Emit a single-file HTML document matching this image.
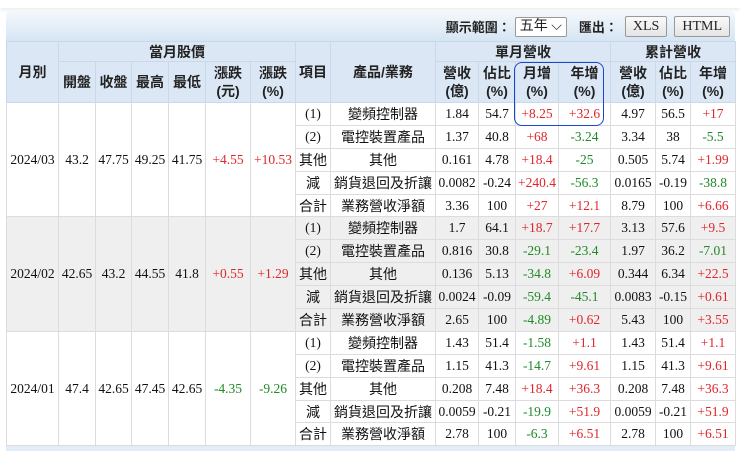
<!DOCTYPE html>
<html><head><meta charset="utf-8"><style>
body{margin:0;width:740px;height:449px;overflow:hidden;background:#fff;font-family:"Liberation Serif","Noto Sans CJK TC",serif;}
.top{position:absolute;left:0;top:0;width:740px;height:8px;background:#fff;box-shadow:0 2px 4px rgba(0,0,0,.08);}
.panel{position:absolute;left:6px;top:11px;width:729px;height:440px;background:#e3edf7;border-radius:6px 6px 0 0;}
.bar{position:absolute;left:6px;top:11px;width:729px;height:30px;background:linear-gradient(#f4f8fc,#d6e5f3);border-radius:6px 6px 0 0;}
.tools{position:absolute;right:10px;top:16px;font:bold 13px "Liberation Sans","Noto Sans CJK TC",sans-serif;color:#222;display:flex;align-items:center;gap:4px;}
.sel{border:1px solid #999;background:#fff;font:14px "Liberation Serif","Noto Sans CJK TC",serif;padding:0 4px;height:18px;line-height:18px;border-radius:2px;font-weight:normal}
.btn{border:1px solid #999;background:linear-gradient(#fafafa,#e4e4e4);font:14px "Liberation Serif",serif;padding:0 7px;height:19px;line-height:19px;border-radius:2px;font-weight:normal;margin-left:3px}
table{position:absolute;left:6px;top:41px;border-collapse:collapse;table-layout:fixed;width:729px;font-size:13.5px;}
th{background:#dbe7f4;border:1px solid #c9d9ea;font:bold 14px "Liberation Sans","Noto Sans CJK TC",sans-serif;color:#222;line-height:18px;padding:0;}
td{border:1px solid #dcdcdc;text-align:center;padding:0;height:21.9px;color:#111;white-space:nowrap;background:#fff}
td.c{font-family:"Liberation Sans","Noto Sans CJK TC",sans-serif;font-size:14px}
tr.g td{background:#efefef}
.r{color:#e0262a}.gr{color:#1f8a28}
.box{position:absolute;left:514px;top:62px;width:88px;height:62px;border:1.5px solid #1848d0;border-radius:8px;}
</style></head><body>
<div class="top"></div>
<div class="panel"></div>
<div class="bar"></div>
<div class="tools">顯示範圍：<span class="sel">五年 ⌵</span><span style="margin-left:8px">匯出：</span><span class="btn">XLS</span><span class="btn">HTML</span></div>
<table>
<colgroup><col style="width:52px"><col style="width:37px"><col style="width:36px"><col style="width:37px"><col style="width:37px"><col style="width:45px"><col style="width:45px"><col style="width:35px"><col style="width:105px"><col style="width:43px"><col style="width:37px"><col style="width:43px"><col style="width:52px"><col style="width:45px"><col style="width:35px"><col style="width:45px"></colgroup>
<tr style="height:20px"><th rowspan="2">月別</th><th colspan="6">當月股價</th><th rowspan="2">項目</th><th rowspan="2">產品/業務</th><th colspan="4">單月營收</th><th colspan="3">累計營收</th></tr>
<tr style="height:41px"><th>開盤</th><th>收盤</th><th>最高</th><th>最低</th><th>漲跌<br>(元)</th><th>漲跌<br>(%)</th><th>營收<br>(億)</th><th>佔比<br>(%)</th><th>月增<br>(%)</th><th>年增<br>(%)</th><th>營收<br>(億)</th><th>佔比<br>(%)</th><th>年增<br>(%)</th></tr>

<tr><td rowspan="5">2024/03</td><td rowspan="5">43.2</td><td rowspan="5">47.75</td><td rowspan="5">49.25</td><td rowspan="5">41.75</td><td rowspan="5" class="r">+4.55</td><td rowspan="5" class="r">+10.53</td><td>(1)</td><td class="c">變頻控制器</td><td>1.84</td><td>54.7</td><td class="r">+8.25</td><td class="r">+32.6</td><td>4.97</td><td>56.5</td><td class="r">+17</td></tr>
<tr><td>(2)</td><td class="c">電控裝置產品</td><td>1.37</td><td>40.8</td><td class="r">+68</td><td class="gr">-3.24</td><td>3.34</td><td>38</td><td class="gr">-5.5</td></tr>
<tr><td class="c">其他</td><td class="c">其他</td><td>0.161</td><td>4.78</td><td class="r">+18.4</td><td class="gr">-25</td><td>0.505</td><td>5.74</td><td class="r">+1.99</td></tr>
<tr><td class="c">減</td><td class="c">銷貨退回及折讓</td><td>0.0082</td><td>-0.24</td><td class="r">+240.4</td><td class="gr">-56.3</td><td>0.0165</td><td>-0.19</td><td class="gr">-38.8</td></tr>
<tr><td class="c">合計</td><td class="c">業務營收淨額</td><td>3.36</td><td>100</td><td class="r">+27</td><td class="r">+12.1</td><td>8.79</td><td>100</td><td class="r">+6.66</td></tr>

<tr class="g"><td rowspan="5">2024/02</td><td rowspan="5">42.65</td><td rowspan="5">43.2</td><td rowspan="5">44.55</td><td rowspan="5">41.8</td><td rowspan="5" class="r">+0.55</td><td rowspan="5" class="r">+1.29</td><td>(1)</td><td class="c">變頻控制器</td><td>1.7</td><td>64.1</td><td class="r">+18.7</td><td class="r">+17.7</td><td>3.13</td><td>57.6</td><td class="r">+9.5</td></tr>
<tr class="g"><td>(2)</td><td class="c">電控裝置產品</td><td>0.816</td><td>30.8</td><td class="gr">-29.1</td><td class="gr">-23.4</td><td>1.97</td><td>36.2</td><td class="gr">-7.01</td></tr>
<tr class="g"><td class="c">其他</td><td class="c">其他</td><td>0.136</td><td>5.13</td><td class="gr">-34.8</td><td class="r">+6.09</td><td>0.344</td><td>6.34</td><td class="r">+22.5</td></tr>
<tr class="g"><td class="c">減</td><td class="c">銷貨退回及折讓</td><td>0.0024</td><td>-0.09</td><td class="gr">-59.4</td><td class="gr">-45.1</td><td>0.0083</td><td>-0.15</td><td class="r">+0.61</td></tr>
<tr class="g"><td class="c">合計</td><td class="c">業務營收淨額</td><td>2.65</td><td>100</td><td class="gr">-4.89</td><td class="r">+0.62</td><td>5.43</td><td>100</td><td class="r">+3.55</td></tr>

<tr><td rowspan="5">2024/01</td><td rowspan="5">47.4</td><td rowspan="5">42.65</td><td rowspan="5">47.45</td><td rowspan="5">42.65</td><td rowspan="5" class="gr">-4.35</td><td rowspan="5" class="gr">-9.26</td><td>(1)</td><td class="c">變頻控制器</td><td>1.43</td><td>51.4</td><td class="gr">-1.58</td><td class="r">+1.1</td><td>1.43</td><td>51.4</td><td class="r">+1.1</td></tr>
<tr><td>(2)</td><td class="c">電控裝置產品</td><td>1.15</td><td>41.3</td><td class="gr">-14.7</td><td class="r">+9.61</td><td>1.15</td><td>41.3</td><td class="r">+9.61</td></tr>
<tr><td class="c">其他</td><td class="c">其他</td><td>0.208</td><td>7.48</td><td class="r">+18.4</td><td class="r">+36.3</td><td>0.208</td><td>7.48</td><td class="r">+36.3</td></tr>
<tr><td class="c">減</td><td class="c">銷貨退回及折讓</td><td>0.0059</td><td>-0.21</td><td class="gr">-19.9</td><td class="r">+51.9</td><td>0.0059</td><td>-0.21</td><td class="r">+51.9</td></tr>
<tr><td class="c">合計</td><td class="c">業務營收淨額</td><td>2.78</td><td>100</td><td class="gr">-6.3</td><td class="r">+6.51</td><td>2.78</td><td>100</td><td class="r">+6.51</td></tr>
</table>
<div class="box"></div>
</body></html>
